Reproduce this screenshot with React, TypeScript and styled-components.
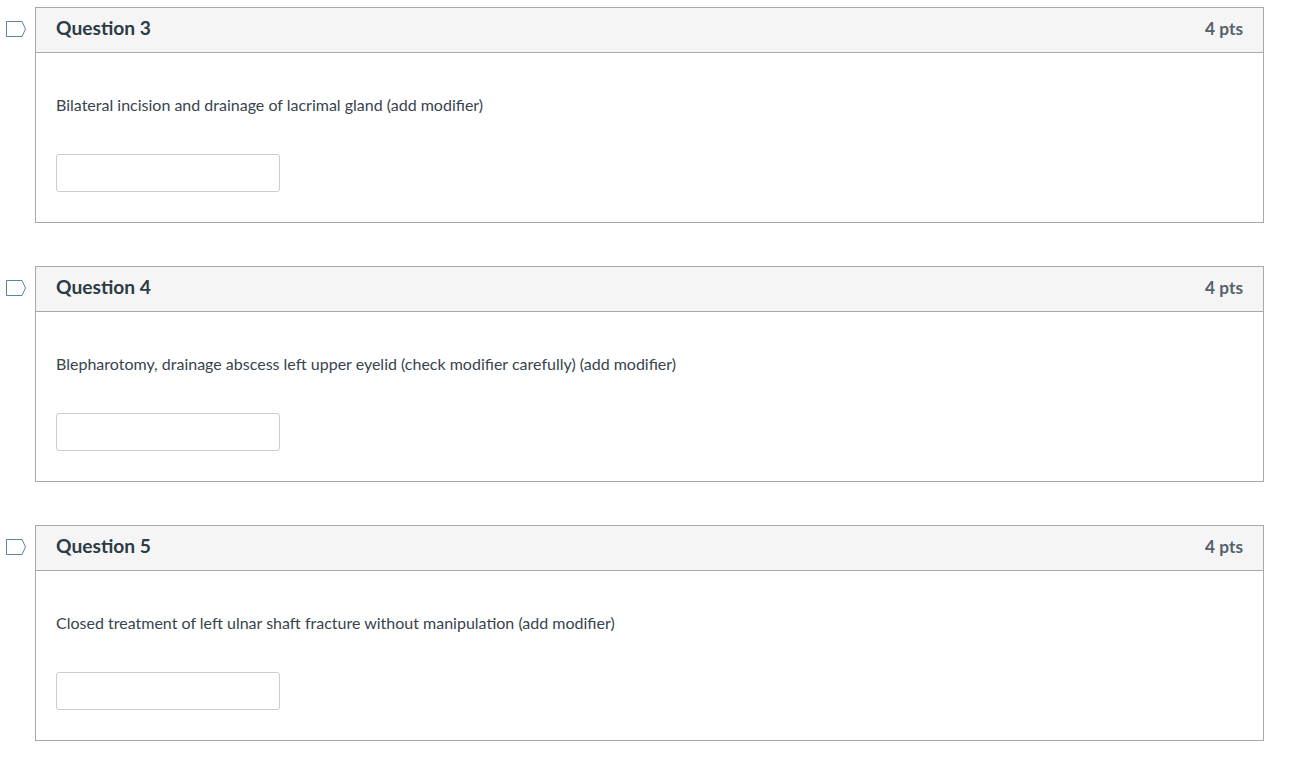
import styled, { createGlobalStyle } from 'styled-components';

const GlobalStyle = createGlobalStyle`
  html, body { margin: 0; padding: 0; background: #fff; }
  body { font-family: Lato, "Open Sans", sans-serif; color: #2d3b45; }
`;

const Page = styled.div`
  display: flex;
  flex-direction: column;
  gap: 43px;
  width: 1264px;
  padding-top: 7px;
`;

const Row = styled.div`
  display: flex;
  align-items: flex-start;
`;

const FlagCol = styled.div`
  width: 35px;
  flex: none;
  padding: 14px 0 0 5px;
  box-sizing: border-box;
`;

const Card = styled.div`
  flex: 1;
  height: 216px;
  box-sizing: border-box;
  border: 1px solid #a9a9a9;
  display: flex;
  flex-direction: column;
`;

const Header = styled.div`
  height: 45px;
  flex: none;
  box-sizing: border-box;
  background: #f5f5f5;
  border-bottom: 1px solid #a9a9a9;
  display: flex;
  align-items: center;
  justify-content: space-between;
  padding: 0 20px 3px;
`;

const Title = styled.h2`
  margin: 0 0 2px;
  font-size: 19.2px;
  font-weight: 700;
  color: #2d3b45;
`;

const Points = styled.span`
  font-size: 17.3px;
  font-weight: 700;
  color: #56626b;
`;

const Body = styled.div`
  padding: 42px 20px 0;
`;

const Prompt = styled.p`
  margin: 0;
  font-size: 16px;
  line-height: 20px;
  color: #37444e;
`;

const Answer = styled.input`
  display: block;
  box-sizing: border-box;
  width: 224px;
  height: 38px;
  margin-top: 39px;
  padding: 0 8px;
  background: #fff;
  border: 1px solid #c7cdd1;
  border-radius: 3px;
  outline: none;
`;

const Flag = () => (
  <svg width="22" height="17" viewBox="0 0 22 17" fill="none" style={{ display: 'block' }}>
    <path d="M1.5 .5H17L20.5 8L17 15.5H1.5Z" stroke="#5a84a1" strokeWidth="1" />
  </svg>
);

const questions = [
  { n: 3, text: 'Bilateral incision and drainage of lacrimal gland (add modifier)' },
  { n: 4, text: 'Blepharotomy, drainage abscess left upper eyelid (check modifier carefully) (add modifier)' },
  { n: 5, text: 'Closed treatment of left ulnar shaft fracture without manipulation (add modifier)' },
];

export default function App() {
  return (
    <>
      <GlobalStyle />
      <Page>
        {questions.map((q) => (
          <Row key={q.n}>
            <FlagCol>
              <Flag />
            </FlagCol>
            <Card>
              <Header>
                <Title>Question {q.n}</Title>
                <Points>4 pts</Points>
              </Header>
              <Body>
                <Prompt>{q.text}</Prompt>
                <Answer type="text" />
              </Body>
            </Card>
          </Row>
        ))}
      </Page>
    </>
  );
}
